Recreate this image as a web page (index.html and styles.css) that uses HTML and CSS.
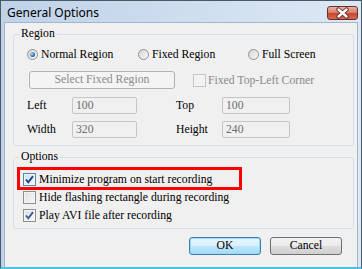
FILE: index.html
```html
<!DOCTYPE html>
<html>
<head>
  <link rel="stylesheet" href="styles.css">
</head>
<body>
  <div class="window">
    <div class="titlebar">
      <span class="title">General Options</span>
      <div class="close-btn">
        <svg width="29" height="12" viewBox="0 0 29 12">
          <path d="M10.5 2.5 L18.5 9.5 M18.5 2.5 L10.5 9.5" stroke="#5e2620" stroke-width="4.2" stroke-linecap="round"/>
          <path d="M10.5 2.5 L18.5 9.5 M18.5 2.5 L10.5 9.5" stroke="#ffffff" stroke-width="2.4" stroke-linecap="round"/>
        </svg>
      </div>
    </div>

    <div class="content">
      <fieldset class="group">
        <legend>Region</legend>
        <div class="region-body">
          <div class="radio-row">
            <label class="radio col1"><span class="radio-mark checked"></span>Normal Region</label>
            <label class="radio col2"><span class="radio-mark"></span>Fixed Region</label>
            <label class="radio"><span class="radio-mark"></span>Full Screen</label>
          </div>
          <div class="button-row">
            <div class="btn btn-disabled select-btn">Select Fixed Region</div>
            <label class="check-item disabled corner">
              <span class="check-box"></span>Fixed Top-Left Corner
            </label>
          </div>
          <div class="field-row">
            <span class="field-label">Left</span>
            <div class="field narrow">100</div>
            <span class="field-label second">Top</span>
            <div class="field wide">100</div>
          </div>
          <div class="field-row">
            <span class="field-label">Width</span>
            <div class="field narrow">320</div>
            <span class="field-label second">Height</span>
            <div class="field wide">240</div>
          </div>
        </div>
      </fieldset>

      <fieldset class="group options">
        <legend>Options</legend>
        <div class="options-body">
          <label class="check-item">
            <span class="check-box focus">
              <svg width="9" height="9" viewBox="0 0 9 9"><path d="M1 4.5 L3.3 7.3 L8 1.2" stroke="#1f3f86" stroke-width="1.9" fill="none"/></svg>
            </span>Minimize program on start recording
            <span class="highlight"></span>
          </label>
          <label class="check-item">
            <span class="check-box"></span>Hide flashing rectangle during recording
          </label>
          <label class="check-item">
            <span class="check-box">
              <svg width="9" height="9" viewBox="0 0 9 9"><path d="M1 4.5 L3.3 7.3 L8 1.2" stroke="#3a5a9a" stroke-width="1.9" fill="none"/></svg>
            </span>Play AVI file after recording
          </label>
        </div>
      </fieldset>

      <div class="buttons">
        <div class="btn btn-default">OK</div>
        <div class="btn">Cancel</div>
      </div>
    </div>
  </div>
</body>
</html>
```

FILE: styles.css
```css
body {
  margin: 0;
  font-family: "Liberation Serif", serif;
  font-size: 11.7px;
  color: #000;
}

.window {
  width: 362px;
  height: 269px;
  box-sizing: border-box;
  border: 1px solid #4b5866;
  border-bottom: 2px solid #4cc3df;
  background: linear-gradient(to right, #bfd2e8, #dce8f5);
  display: flex;
  flex-direction: column;
}

.titlebar {
  height: 21px;
  flex-shrink: 0;
  display: flex;
  justify-content: space-between;
  align-items: flex-start;
  padding: 0 3px 0 6px;
}

.title {
  font-family: "Noto Sans", sans-serif;
  font-size: 12px;
  line-height: 14px;
  margin-top: 5px;
}

.close-btn {
  margin-top: 5px;
  width: 31px;
  height: 14px;
  box-sizing: border-box;
  border: 1px solid #6e2d25;
  border-radius: 3px;
  background: linear-gradient(#eab3a4, #d98069 45%, #c4482f 55%, #d26b50);
  display: flex;
}

.content {
  flex: 1;
  margin: 0 3px;
  background: #f0f0f0;
  border: 1px solid #a3b5ca;
  border-bottom: none;
  padding: 4px 3px 0 8px;
  display: flex;
  flex-direction: column;
}

.group {
  margin: 0;
  padding: 0;
  min-width: 0;
  border: 1px solid #d5dfe5;
  border-radius: 3px;
}

.group legend {
  margin-left: 5px;
  padding: 0 2px;
  line-height: 14px;
}

.region-body {
  padding: 6px 0 7px 13px;
}

.radio-row {
  display: flex;
  align-items: center;
  height: 14px;
}

.radio {
  display: flex;
  align-items: center;
  gap: 3px;
}

.col1 { width: 111px; }
.col2 { width: 110px; }

.radio-mark {
  position: relative;
  width: 11px;
  height: 11px;
  box-sizing: border-box;
  border-radius: 50%;
  border: 1px solid #8e8f8f;
  background: linear-gradient(135deg, #d6d6d6, #f8f8f8);
}

.radio-mark.checked::after {
  content: '';
  position: absolute;
  left: 2px;
  top: 2px;
  width: 5px;
  height: 5px;
  border-radius: 50%;
  background: radial-gradient(circle at 35% 35%, #b4e2ff, #2a6fb4 60%, #0f3e73);
}

.button-row {
  display: flex;
  align-items: center;
  height: 18px;
  margin-top: 10px;
}

.btn {
  width: 72px;
  height: 18px;
  box-sizing: border-box;
  border: 1px solid #707070;
  border-radius: 3px;
  background: linear-gradient(#f2f2f2, #ebebeb 50%, #dddddd 51%, #cfcfcf);
  display: flex;
  align-items: center;
  justify-content: center;
  line-height: 14px;
}

.btn-default {
  border-color: #3c7fb1;
  background: linear-gradient(#eaf6fd, #d9f0fc 50%, #bee6fd 51%, #a7d9f5);
  box-shadow: inset 0 0 0 1px #9ad8f7;
}

.btn-disabled {
  border-color: #adb2b5;
  background: #f4f4f4;
  color: #8a8a8a;
}

.select-btn {
  width: 146px;
  margin-left: 2px;
}

.check-item {
  position: relative;
  display: flex;
  align-items: center;
  gap: 3px;
  height: 18px;
}

.check-item.disabled {
  color: #8a8a8a;
}

.corner {
  margin-left: 18px;
  gap: 2px;
}

.check-box {
  width: 13px;
  height: 13px;
  box-sizing: border-box;
  border: 1px solid #8f8f8f;
  background: linear-gradient(135deg, #dcdcdc, #fbfbfb);
  box-shadow: inset 0 0 0 1px #f4f4f4;
  display: flex;
  align-items: center;
  justify-content: center;
}

.check-box.focus {
  border-color: #5586a3;
  background: linear-gradient(135deg, #c8e2f3, #f3f9fd);
}

.disabled .check-box {
  border-color: #c5c5c5;
  background: #f2f2f2;
}

.field-row {
  display: flex;
  align-items: center;
  height: 17px;
  margin-top: 8px;
}

.field-row + .field-row {
  margin-top: 7px;
}

.field-label {
  width: 45px;
}

.field-label.second {
  width: 46px;
  margin-left: 39px;
}

.field {
  height: 17px;
  box-sizing: border-box;
  border: 1px solid #c2c5ca;
  border-radius: 2px;
  background: #f0f0f0;
  color: #6d6d6d;
  padding-left: 3px;
  line-height: 15px;
}

.narrow { width: 65px; }
.wide { width: 68px; }

.options {
  margin-top: 4px;
}

.options-body {
  padding: 6px 0 4px 9px;
}

.highlight {
  position: absolute;
  left: -6px;
  top: -3px;
  width: 225px;
  height: 23px;
  box-sizing: border-box;
  border: 3px solid #ff0000;
}

.buttons {
  display: flex;
  justify-content: flex-end;
  gap: 9px;
  margin-top: 8px;
  padding-right: 12px;
}
```
